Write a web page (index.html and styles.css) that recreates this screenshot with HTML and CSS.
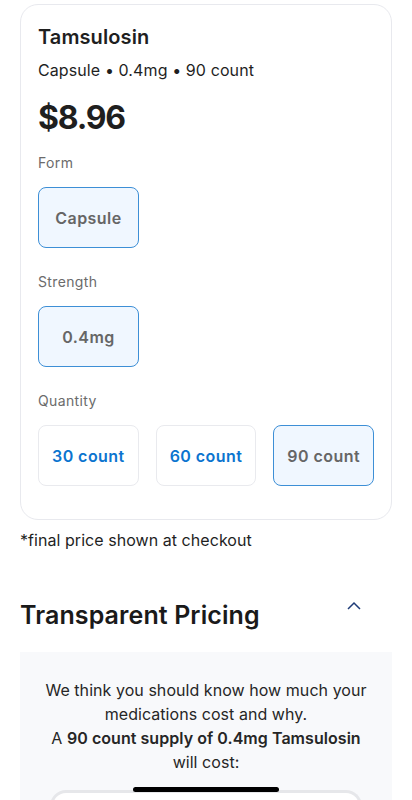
FILE: index.html
```
<!DOCTYPE html>
<html>
<head>
<meta charset="utf-8">
<link rel="stylesheet" href="styles.css">
</head>
<body>
<div class="page">
  <div class="card">
    <h1 class="name">Tamsulosin</h1>
    <p class="desc">Capsule • 0.4mg • 90 count</p>
    <p class="price">$8.96</p>
    <div class="group">
      <p class="label">Form</p>
      <div class="opts"><button class="opt selected">Capsule</button></div>
    </div>
    <div class="group">
      <p class="label">Strength</p>
      <div class="opts"><button class="opt selected">0.4mg</button></div>
    </div>
    <div class="group">
      <p class="label">Quantity</p>
      <div class="opts">
        <button class="opt">30 count</button>
        <button class="opt">60 count</button>
        <button class="opt selected">90 count</button>
      </div>
    </div>
  </div>
  <p class="note">*final price shown at checkout</p>
  <div class="tp-head">
    <h2 class="tp-title">Transparent Pricing</h2>
    <svg class="chev" width="16" height="10" viewBox="0 0 16 10"><path d="M2 8 L8 2 L14 8" fill="none" stroke="#1f3c78" stroke-width="1.5"/></svg>
  </div>
  <div class="tp-box">
    <p class="tp-text">We think you should know how much your medications cost and why.<br>A <b>90 count supply of 0.4mg Tamsulosin</b> will cost:</p>
    <div class="tp-inner"></div>
  </div>
</div>
<div class="home-bar"></div>
</body>
</html>
```
FILE: styles.css
```
* { box-sizing: border-box; }
html, body { margin: 0; padding: 0; background: #fff; }
body { font-family: Inter, "Noto Sans", sans-serif; color: #1c1c1e; height: 800px; overflow: hidden; }
.page { padding: 4px 20px 0 20px; }
.card {
  border: 1px solid #e8e9ee;
  border-radius: 18px;
  padding: 18px 17px 33px 17px;
}
.name { margin: 0; font-size: 20px; font-weight: 600; line-height: 28px; letter-spacing: 0.1px; color: #1f1f1f; }
.desc { margin: 8px 0 0; font-size: 16px; line-height: 22px; letter-spacing: 0.1px; color: #1f1f1f; }
.price { margin: 17px 0 0; font-size: 32px; font-weight: 700; line-height: 40px; letter-spacing: -1.2px; color: #1f1f1f; }
.group { margin-top: 15px; }
.group + .group { margin-top: 24px; }
.label { margin: 0; font-size: 14px; line-height: 20px; color: #6b6b6b; letter-spacing: 0.35px; }
.opts { display: flex; gap: 17px; margin-top: 14px; }
.opt {
  width: 101px; height: 61px;
  border: 1px solid #e9eaee; border-radius: 8px;
  background: #fff;
  font-family: inherit; font-size: 16px; font-weight: 600; letter-spacing: 0.45px;
  color: #0b74cf;
  padding: 0;
}
.opt.selected { border-color: #3d8fd6; background: #f0f7ff; color: #666; }
.note { margin: 9px 0 0; font-size: 16px; line-height: 22px; letter-spacing: 0.05px; color: #1f1f1f; }
.tp-head { display: flex; justify-content: space-between; align-items: flex-start; margin-top: 48px; }
.tp-title { margin: 0; font-size: 25px; font-weight: 600; line-height: 32px; letter-spacing: 0.1px; color: #1a1a1a; }
.chev { margin-right: 30px; margin-top: 2px; }
.tp-box { background: #f8f9fb; margin-top: 21px; padding: 26px 20px 0; height: 200px; }
.tp-text { margin: 0; text-align: center; font-size: 16px; line-height: 24px; letter-spacing: 0.05px; color: #262626; }
.tp-text b { font-weight: 600; }
.tp-inner { margin: 16px 10px 0; height: 80px; border: 3px solid #e6e7ea; border-bottom: none; border-radius: 16px 16px 0 0; background: #fff; }
.home-bar { position: fixed; left: 133px; top: 787px; width: 146px; height: 5px; border-radius: 3px; background: #000; }
```
